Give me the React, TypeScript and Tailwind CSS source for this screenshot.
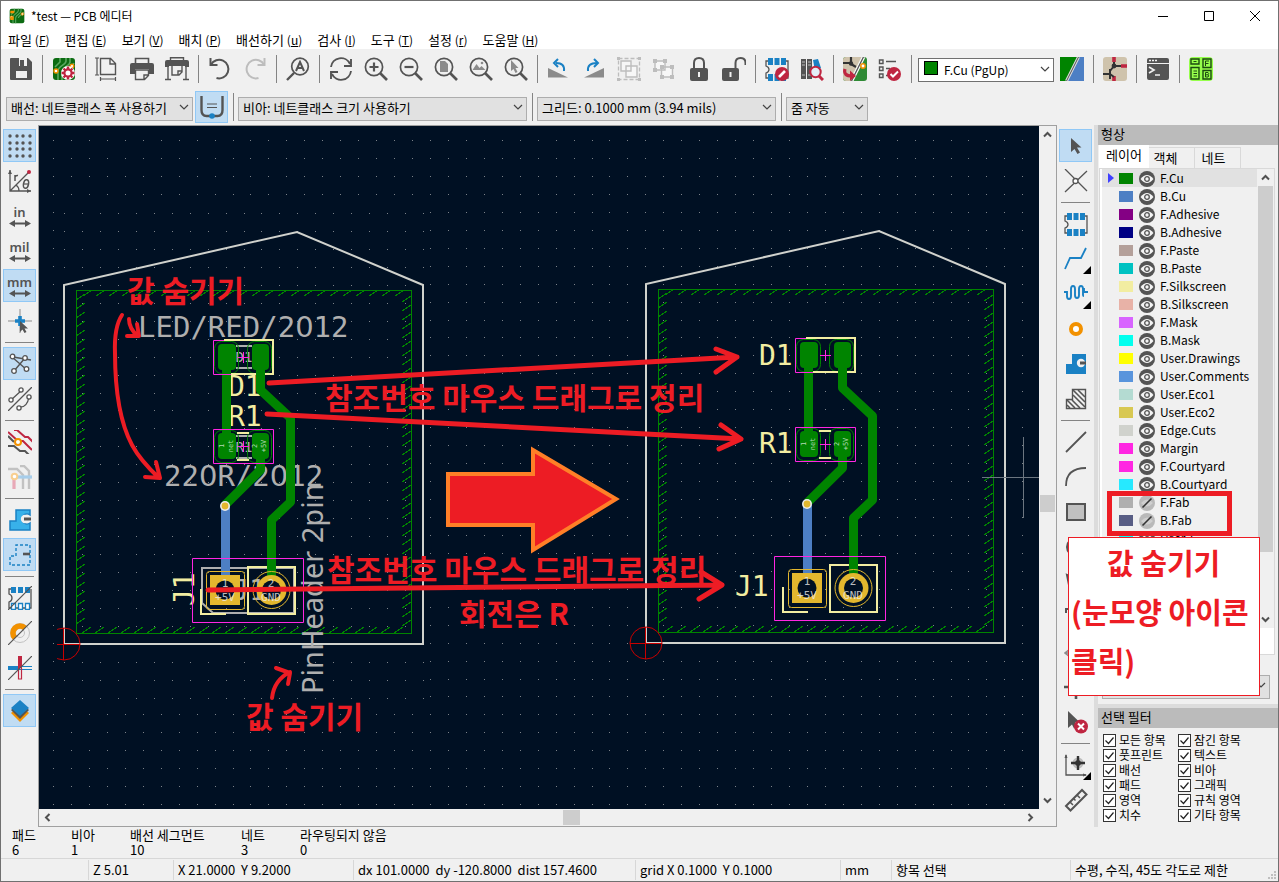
import React from 'react';

const DARK = '#545454';
const BLUE = '#1a81c4';
const RED = '#bf2641';
const ORANGE = '#f29100';
const CU = '#008400';
const SILK = '#f2eda1';
const FAB = '#afafaf';
const PAD = '#e3b72e';
const BG = '#001023';
const MARK = '#ed1c24';

type IconProps = { children: React.ReactNode; size?: number; color?: string };

const Ic: React.FC<IconProps> = ({ children, size = 24, color = DARK }) => (
  <svg width={size} height={size} viewBox={`0 0 ${size} ${size}`} fill="none" stroke={color} strokeWidth="1.6">
    {children}
  </svg>
);

const Lens: React.FC<{ children: React.ReactNode }> = ({ children }) => (
  <Ic>
    <circle cx="10" cy="10" r="8.6" strokeWidth="1.7" />
    <path d="M16 16l7 7" strokeWidth="2.6" />
    {children}
  </Ic>
);

const boardArt = (
  <>
    <rect width="22" height="22" x="1" y="1" rx="3" fill="#0c6b12" stroke="none" />
    <path d="M8 1v4L3 10M14 1v3c0 4-8 5-8 10v9M18 1v4c0 4-8 5-8 10v8M22 6c-2 5-7 4-8 9" stroke="#5aa860" strokeWidth="1.6" />
    <circle cx="4" cy="14" r="2" fill="#fff" stroke={ORANGE} strokeWidth="1.4" />
    <circle cx="20" cy="9" r="1.8" fill="#fff" stroke={ORANGE} strokeWidth="1.4" />
  </>
);

const chip = (
  <>
    <path d="M3 4H1v5q3 1 3 3.500t-3 3.500V21h2M21 4h2v17h-2" strokeWidth="1.300" />
    <path d="M3 1h5v7H3zM9.500 1h5v7h-5zM16 1h5v7h-5zM3 17h5v7H3zM9.500 17h5v7h-5zM16 17h5v7h-5z" fill={BLUE} stroke="none" />
  </>
);

const schematicArt = (
  <>
    <rect width="24" height="24" rx="3" fill="#cfc3ac" stroke="none" />
    <path d="M11 0v5M18 9h6M11 24v-5" stroke={RED} strokeWidth="3.600" />
    <path d="M11 5v5M11 9h7M11 9l-4 5M7 12v10M0 17h7M7 17l4 3" stroke="#333" strokeWidth="2" />
    <circle cx="11" cy="9" r="2.400" fill="#333" stroke="none" />
  </>
);

const icons: Record<string, React.ReactNode> = {
  save: (
    <Ic>
      <path d="M1 2q0-1 1-1h17l4 4v17q0 1-1 1H2q-1 0-1-1z" fill={DARK} stroke="none" />
      <path d="M7 1h11v8H7zM7 14h11v7H7z" fill="#f0f0f0" stroke="none" />
      <path d="M11 3h4v6h-4z" fill={DARK} stroke="none" />
      <path d="M7 1h3v8H7z" fill={DARK} stroke="none" />
    </Ic>
  ),
  boardSetup: (
    <Ic>
      {boardArt}
      <circle cx="16" cy="16" r="7" fill="#fff" stroke="none" />
      <path d="M16 9.500v13M9.500 16h13M11.500 11.500l9 9M20.500 11.500l-9 9" stroke={RED} strokeWidth="2.400" />
      <circle cx="16" cy="16" r="3.600" fill="#fff" stroke={RED} strokeWidth="2.200" />
    </Ic>
  ),
  page: (
    <Ic>
      <path d="M5.500 1.500h10l5 5v11h-15zM15 1.500v5.500h5.500" strokeWidth="1.400" />
      <path d="M0 1h4M0 18h4M2 1v17M5 22h16M5.500 20v4M20.500 20v4" strokeWidth="1.200" />
    </Ic>
  ),
  print: (
    <Ic>
      <path d="M5.500 7V1.500h13V7" />
      <path d="M0 8q0-2 2-2h20q2 0 2 2v9h-5v-5H5v5H0z" fill={DARK} stroke="none" />
      <path d="M5.500 13v9.500h9l4-4V13zM14 22v-4h4" fill="#f0f0f0" strokeWidth="1.400" />
    </Ic>
  ),
  plot: (
    <Ic>
      <path d="M5.500 3V.8h13V3" strokeWidth="1.400" />
      <path d="M0 5q0-2 2-2h20q2 0 2 2v5h-4V9H4v1H0z" fill={DARK} stroke="none" />
      <path d="M3 10v12M21 10v12M0 22.500h6M18 22.500h6M7 9v9h7l3-3V9M13 18v-4h4" strokeWidth="1.400" />
    </Ic>
  ),
  undo: (
    <Ic>
      <path d="M2.500 1v7h7" strokeWidth="2" />
      <path d="M3 7.500A9.300 9.300 0 1 1 8.500 21" strokeWidth="2" />
    </Ic>
  ),
  redo: (
    <Ic color="#bdbdbd">
      <path d="M21.500 1v7h-7" strokeWidth="2" />
      <path d="M21 7.500A9.300 9.300 0 1 0 15.500 21" strokeWidth="2" />
    </Ic>
  ),
  find: (
    <Ic>
      <circle cx="14" cy="9.500" r="8.300" strokeWidth="1.700" />
      <path d="M8 16l-7 7" strokeWidth="2.400" />
      <path d="M10 14l4-9 4 9M11.500 11h5" strokeWidth="2" />
    </Ic>
  ),
  refresh: (
    <Ic>
      <path d="M2 10a10 10 0 0 1 19-3M22 14a10 10 0 0 1-19 3" strokeWidth="1.900" />
      <path d="M22 2v7h-7M2 22v-7h7" strokeWidth="1.900" />
    </Ic>
  ),
  zoomIn: (
    <Lens>
      <path d="M10 5.500v9M5.500 10h9" strokeWidth="2.200" />
    </Lens>
  ),
  zoomOut: (
    <Lens>
      <path d="M5.500 10h9" strokeWidth="2.200" />
    </Lens>
  ),
  zoomPage: (
    <Lens>
      <path d="M6 4h5l3 3v8H6z" fill="#8b8b8b" stroke="none" />
    </Lens>
  ),
  zoomObjects: (
    <Lens>
      <path d="M3.500 13l4-6 3 4 2-2 4 4z" fill="#8b8b8b" stroke="none" />
      <circle cx="13" cy="6" r="1.300" fill="#8b8b8b" stroke="none" />
    </Lens>
  ),
  zoomSelection: (
    <Lens>
      <path d="M7 3v11l2.500-2 2 4 2-1-2-4h3z" fill="#8b8b8b" stroke="none" />
    </Lens>
  ),
  rotateCcw: (
    <Ic>
      <path d="M1 11l20 9.500H1z" fill="#8b8b8b" stroke="none" />
      <path d="M17 14q1-8-8-8" stroke={BLUE} strokeWidth="2" />
      <path d="M11 2L7 6l4 4" stroke={BLUE} strokeWidth="2" />
    </Ic>
  ),
  rotateCw: (
    <Ic>
      <path d="M22 11L2 20.500h20z" fill="#8b8b8b" stroke="none" />
      <path d="M6 14q-1-8 9-8" stroke={BLUE} strokeWidth="2" />
      <path d="M12 2l4 4-4 4" stroke={BLUE} strokeWidth="2" />
    </Ic>
  ),
  group: (
    <Ic color="#bdbdbd">
      <rect x="1.500" y="1.500" width="21" height="21" strokeDasharray="4 2" strokeWidth="1.300" />
      <path d="M4 4h10v10H4zM9 9h11v11H9z" fill="#f7f7f7" strokeWidth="1.400" />
      <path d="M0 0h3v3H0zM21 0h3v3h-3zM0 21h3v3H0zM21 21h3v3h-3z" fill="#bdbdbd" stroke="none" />
    </Ic>
  ),
  ungroup: (
    <Ic color="#bdbdbd">
      <path d="M3 4h10v9H3zM9.500 10h11v10h-11z" fill="#f7f7f7" strokeWidth="1.400" />
      <path d="M1 2h4v4H1zM11 2h4v4h-4zM1 11h4v4H1zM8 8h4v4H8zM18 8h4v4h-4zM8 18h4v4H8zM18 18h4v4h-4z" fill="#bdbdbd" stroke="none" />
    </Ic>
  ),
  lock: (
    <Ic>
      <rect x="3" y="11" width="18" height="13" rx="2" fill={DARK} stroke="none" />
      <path d="M7 11V6q0-5 5-5t5 5v5" strokeWidth="2" />
      <path d="M12 15v5" stroke="#f0f0f0" strokeWidth="2" />
    </Ic>
  ),
  unlock: (
    <Ic>
      <rect x="0" y="11" width="17" height="13" rx="2" fill={DARK} stroke="none" />
      <path d="M13.500 11V6q0-5 5-5t5 5v2" strokeWidth="2" />
      <path d="M8.500 15v5" stroke="#f0f0f0" strokeWidth="2" />
    </Ic>
  ),
  footprintEditor: (
    <Ic>
      {chip}
      <circle cx="17" cy="17" r="7" fill={RED} stroke="none" />
      <path d="M14 20l6-6" stroke="#fff" strokeWidth="2.600" />
    </Ic>
  ),
  library: (
    <Ic>
      <path d="M1 2h5v20H1zM7 2h5v20H7z" fill={DARK} stroke="none" />
      <path d="M2 5h3M2 8h3M8 5h3M8 8h3M2 18h3M8 18h3" stroke="#bbb" strokeWidth="1" />
      <path d="M13 3l5-1 3 9-6 3z" fill={BLUE} stroke="none" />
      <circle cx="15.500" cy="15" r="5.200" fill="#e4eef7" stroke={RED} strokeWidth="2" />
      <path d="M19 19l4 4" stroke={RED} strokeWidth="3" />
    </Ic>
  ),
  updatePcb: (
    <Ic>
      <rect width="24" height="24" rx="3" fill="#2f8a35" stroke="none" />
      <path d="M0 3q0-3 3-3h16L7 24H3q-3 0-3-3z" fill="#cfc3ac" stroke="none" />
      <path d="M8 0v7M8 6H0M8 7l5 3" stroke="#333" strokeWidth="2.200" />
      <circle cx="8" cy="6.500" r="2.200" fill="#333" stroke="none" />
      <path d="M20.500 0l-12 24" stroke="#fff" strokeWidth="3.600" />
      <path d="M20.500 0l-12 24" stroke={DARK} strokeWidth="1.300" />
      <circle cx="20" cy="9" r="2.200" fill="#fff" stroke={ORANGE} strokeWidth="1.500" />
      <path d="M2 12q-2 7 7 7" stroke={RED} strokeWidth="3.200" />
      <path d="M7 13.500V24l6-5z" fill={RED} stroke="none" />
    </Ic>
  ),
  drc: (
    <Ic>
      <path d="M1.500 3h3.500v3.500H1.500zM1.500 10h3.500v3.500H1.500zM1.500 17h3.500v3.500H1.500z" strokeWidth="1.400" />
      <path d="M8 4.500h10M8 11.500h4M8 18.500h2" strokeWidth="1.400" />
      <circle cx="16" cy="17" r="7" fill={RED} stroke="none" />
      <path d="M12.500 17l2.500 2.500 5-5" stroke="#fff" strokeWidth="2" />
    </Ic>
  ),
  layerPair: (
    <Ic>
      <path d="M0 0h24v24H0z" fill="#4d7fc4" stroke="none" />
      <path d="M0 0h18L6 24H0z" fill={CU} stroke="none" />
      <path d="M18.500 0l-12 24" stroke="#ddd" strokeWidth="3" />
      <path d="M18.500 0l-12 24" stroke={DARK} strokeWidth="1" />
    </Ic>
  ),
  schematic: <Ic>{schematicArt}</Ic>,
  console: (
    <Ic>
      <path d="M1 3q0-2 2-2h18q2 0 2 2v3H1zM1 7h22v14q0 2-2 2H3q-2 0-2-2z" fill={DARK} stroke="none" />
      <path d="M3 3.500h2M6 3.500h2M9 3.500h2" stroke="#f0f0f0" />
      <path d="M3 10l5 3-5 3M9 18h5" stroke="#f0f0f0" strokeWidth="1.700" />
    </Ic>
  ),
  script: (
    <Ic color="#1c4a10">
      <rect width="24" height="24" rx="4" fill="#96ff4b" stroke="none" />
      <path d="M2 2h8v5H2zM2 10.500h8V22H2zM14 2h8v8.500h-8zM14 13.500h8V22h-8z" strokeWidth="1.400" />
      <path d="M4.500 4.500h3M4.500 14h3.500M4.500 16.500h3.500M4.500 19h3.500M16.500 9V4h3.500M16.500 6.500h3M16.500 15.500v4.500h2.500q1.500-1.200 0-2.200h-2.500M19 17.800q1.500-1.200 0-2.300h-2.500" strokeWidth="1" />
    </Ic>
  ),
  trackWidth: (
    <Ic>
      <path d="M1.500 1v14q0 6 5 6h11q5 0 5-6V1" strokeWidth="2.400" />
      <path d="M7 9h10M7 12.500h10" strokeWidth="1.200" />
      <circle cx="12" cy="21" r="2.800" fill={BLUE} stroke="none" />
    </Ic>
  ),
  grid: (
    <Ic>
      {[2, 9, 15, 22].map((y) =>
        [2, 9, 15, 22].map((x) => <circle key={`${x}-${y}`} cx={x} cy={y} r="1.700" fill={DARK} stroke="none" />)
      )}
    </Ic>
  ),
  polar: (
    <Ic>
      <path d="M2 1v21h21M2 22L21 3M11 22q0-4-3-6" strokeWidth="1.300" />
      <path d="M0 5l2-4 2 4zM19 20l4 2-4 2z" fill={DARK} stroke="none" />
      <circle cx="21" cy="3" r="2" fill={RED} stroke="none" />
      <path d="M7 12V6M7 8q1-2 3-1.500" strokeWidth="1.500" />
      <ellipse cx="18" cy="15" rx="2.500" ry="4.300" strokeWidth="1.500" transform="rotate(12 18 15)" />
      <path d="M15.500 15h5" strokeWidth="1.200" />
    </Ic>
  ),
  cursorShape: (
    <Ic>
      <path d="M0 12h24M12 0v24" strokeWidth="1" stroke="#8b8b8b" />
      <path d="M12 7v10M7 12h10" stroke={BLUE} strokeWidth="3.600" />
      <path d="M12 12v11l2.500-2.500 2 3.500 2-1-2-3.500h3.500z" fill={DARK} stroke="none" />
    </Ic>
  ),
  ratsnest: (
    <Ic>
      <path d="M4 5l15 13M17 6L6 19M5 5l18 3" strokeWidth="1.400" />
      {[[4.5, 4.5], [17, 6], [6, 19], [18.500, 17]].map(([x, y]) => (
        <circle key={x} cx={x} cy={y} r="2.300" fill="#fff" strokeWidth="1.300" />
      ))}
    </Ic>
  ),
  curvedRatsnest: (
    <Ic>
      <path d="M0 24L24 0M3 13L14 3M11 20q8 1 10-10" strokeWidth="1.300" />
      {[[3, 13], [13, 3], [11, 21], [21, 10]].map(([x, y]) => (
        <circle key={`${x}${y}`} cx={x} cy={y} r="2.100" fill="#fff" strokeWidth="1.300" />
      ))}
    </Ic>
  ),
  netHighlight: (
    <Ic>
      <path d="M0 2l10 9h5l7 7 2 2" stroke={RED} strokeWidth="2" />
      <path d="M6 0h3l8 7h3l5 5" stroke={RED} strokeWidth="2" />
      <path d="M0 6l6 6M0 16h6l6 5h5l4 4" strokeWidth="2" />
      <circle cx="10" cy="12" r="3" fill="#fff" stroke={ORANGE} strokeWidth="2" />
    </Ic>
  ),
  contrast: (
    <Ic color="#c2c2c2">
      <path d="M0 4h9l6 6v14M12 1h4l5 5v18" strokeWidth="2.400" />
      <path d="M7 12h17" stroke="#a7cdea" strokeWidth="3.200" />
      <path d="M6 12v12" stroke="#e8a9b7" strokeWidth="3.200" />
      <circle cx="6.500" cy="11.500" r="2.800" fill="#fff" stroke="#f8cf90" strokeWidth="2" />
    </Ic>
  ),
  zoneFilled: (
    <Ic>
      <path d="M2 22V13h6V2h14v5a5 5 0 1 0 0 8v7z" fill="#38b1ea" stroke={BLUE} strokeWidth="1.500" />
      <circle cx="17" cy="11" r="4.200" fill="#f0f0f0" stroke="none" />
      <path d="M16 11h7" strokeWidth="3" />
    </Ic>
  ),
  zoneOutline: (
    <Ic>
      <path d="M2 22V13h6V2h14v20z" stroke={BLUE} strokeWidth="1.400" strokeDasharray="3 2" />
      <path d="M15 11h7" strokeWidth="2.600" />
    </Ic>
  ),
  padSketch: (
    <Ic>
      <path d="M3 3H1v5q3 1 3 4t-3 4v6h22V3" strokeWidth="1.300" />
      <path d="M3 1h5v6H3zM10 1h5v6h-5zM17 1h5v6h-5z" fill={BLUE} stroke="none" />
      <path d="M3.500 17.500h4v6h-4zM10.500 17.500h4v6h-4zM17.500 17.500h4v6h-4z" fill="#fff" stroke={BLUE} strokeWidth="1.300" />
      <path d="M0 24L24 0" strokeWidth="1.200" />
    </Ic>
  ),
  viaSketch: (
    <Ic>
      <circle cx="12" cy="12" r="9.500" stroke="#c2c2c2" strokeWidth="1" />
      <circle cx="12" cy="12" r="4.500" stroke="#c2c2c2" strokeWidth="1" />
      <path d="M7 17A7 7 0 1 1 17 7" stroke={ORANGE} strokeWidth="5.500" />
      <path d="M0 24L24 0" strokeWidth="1.200" />
    </Ic>
  ),
  trackSketch: (
    <Ic>
      <path d="M0 12h12" stroke={BLUE} strokeWidth="4" />
      <path d="M12 10.500h12M12 13.500h12" stroke={BLUE} strokeWidth="1.100" />
      <path d="M12 0v12" stroke={RED} strokeWidth="4" />
      <path d="M10.500 12v11h3V12" stroke={RED} strokeWidth="1.200" />
      <path d="M0 24L24 0" strokeWidth="1.200" />
    </Ic>
  ),
  layers: (
    <Ic>
      <path d="M3 14l9-8 9 8-9 9z" fill={ORANGE} stroke="none" />
      <path d="M3 11l9-8 9 8-9 9z" fill={DARK} stroke="none" />
      <path d="M3 9l9-8 9 8-9 8z" fill={BLUE} stroke="none" />
    </Ic>
  ),
  select: (
    <Ic>
      <path d="M7 4v14l3.500-3 3 5 2.500-1.500-3-5h4.500z" fill={DARK} stroke="none" />
    </Ic>
  ),
  localRatsnest: (
    <Ic>
      <path d="M1 0l22 22M23 2L1 23" strokeWidth="1.300" />
      <circle cx="11.500" cy="12" r="2.500" fill="#fff" strokeWidth="1.300" />
    </Ic>
  ),
  footprint: <Ic>{chip}</Ic>,
  route: (
    <Ic>
      <path d="M1 22L6 11h11L22 1" stroke={BLUE} strokeWidth="1.800" />
    </Ic>
  ),
  tune: (
    <Ic>
      <path d="M0 10h3v4q0 3 2 3t2-3V7q0-3 2-3t2 3v6q0 3 2 3t2-3V7q0-3 2-3t2 3v6q0 1 1 1M19 8v-1h1v3h4" stroke={BLUE} strokeWidth="1.900" />
    </Ic>
  ),
  via: (
    <Ic>
      <circle cx="12" cy="12" r="5" fill="#fff" stroke={ORANGE} strokeWidth="4" />
    </Ic>
  ),
  zone: (
    <Ic>
      <path d="M2 22V12h6V2h14v20z" fill={BLUE} stroke="none" />
      <circle cx="17" cy="11" r="4.200" fill="#f0f0f0" stroke="none" />
      <path d="M16 11h6" strokeWidth="3" />
    </Ic>
  ),
  ruleArea: (
    <Ic>
      <path d="M2.500 21.500V12.500h6v-10h13v19z" strokeWidth="1.400" />
      <path d="M9 3l12 12M14 3l7 7M9 8l12 12M3 13l8 8M8 13l8 8M3 18l3 3" strokeWidth="1.600" />
    </Ic>
  ),
  line: (
    <Ic>
      <path d="M2 22L22 2" strokeWidth="1.800" />
    </Ic>
  ),
  arc: (
    <Ic>
      <path d="M2 21Q2 3 22 3" strokeWidth="1.800" />
    </Ic>
  ),
  rect: (
    <Ic>
      <rect x="3" y="4" width="18" height="16" fill="#c0c0c0" strokeWidth="2" />
    </Ic>
  ),
  circle: (
    <Ic>
      <circle cx="12" cy="12" r="9" fill="#c0c0c0" strokeWidth="2" />
    </Ic>
  ),
  polygon: (
    <Ic>
      <path d="M3 5l9 4 9-5-3 16H6z" fill="#c0c0c0" strokeWidth="2" />
    </Ic>
  ),
  text: (
    <Ic>
      <path d="M2 8V4h20v4M12 4v17" strokeWidth="2" />
    </Ic>
  ),
  dimension: (
    <Ic>
      <path d="M6 9l-5 4 5 4M1 13h22" stroke="#8b8b8b" />
      <path d="M5 14v8" stroke={BLUE} strokeWidth="2" />
    </Ic>
  ),
  origin: (
    <Ic>
      <circle cx="12" cy="12" r="8" fill="#bdbdbd" stroke="none" />
      <path d="M12 1v23M0 12h24" strokeWidth="2.600" />
    </Ic>
  ),
  remove: (
    <Ic>
      <path d="M4 1v17l4-3.500 2 4 3-2-2-4h5z" fill={DARK} stroke="none" />
      <circle cx="17" cy="16.500" r="7" fill={RED} stroke="none" />
      <path d="M14 13.500l6 6M20 13.500l-6 6" stroke="#fff" strokeWidth="2" />
    </Ic>
  ),
  gridOrigin: (
    <Ic>
      <path d="M2 2v20h20" strokeWidth="1.300" />
      <path d="M.5 5L2 1l1.500 4zM19 20.500l4 1.500-4 1.500z" fill={DARK} stroke="none" />
      <circle cx="14" cy="10" r="5.500" fill="#bdbdbd" stroke="none" />
      <path d="M14 3v14M7 10h14" stroke="#333" strokeWidth="2.400" />
      <path d="M14 6l4 4-4 4-4-4z" fill="#333" stroke="none" />
    </Ic>
  ),
  measure: (
    <Ic>
      <path d="M2 18L18 2l4.500 4.500L6.500 22.500z" strokeWidth="2" />
      <path d="M6 14l3 3M9.500 10.500l2 2M13 7l3 3" strokeWidth="1.500" />
    </Ic>
  ),
};

const Unit: React.FC<{ label: string }> = ({ label }) => (
  <span className="flex flex-col items-center font-['Noto_Sans'] text-[13px] leading-[14px] font-semibold text-[#545454]">
    {label}
    <svg className="mt-px" width="22" height="7" viewBox="0 0 22 7" fill="#545454">
      <path d="M0 3.500L6 0v2.500h10V0l6 3.500L16 7V4.500H6V7z" />
    </svg>
  </span>
);

const topBar = [
  'save', '|', 'boardSetup', '|', 'page', 'print', 'plot', '|', 'undo', 'redo', '|', 'find', '|',
  'refresh', 'zoomIn', 'zoomOut', 'zoomPage', 'zoomObjects', 'zoomSelection', '|',
  'rotateCcw', 'rotateCw', 'group', 'ungroup', 'lock', 'unlock', '|',
  'footprintEditor', 'library', '|', 'updatePcb', 'drc', '|',
];
const topBarEnd = ['layerPair', '|', 'schematic', '|', 'console', '|', 'script'];

const leftBar = [
  'grid*', 'polar', 'in', 'mil', 'mm*', 'cursorShape', '|', 'ratsnest*', 'curvedRatsnest', '|',
  'netHighlight', 'contrast', '|', 'zoneFilled', 'zoneOutline*', '|',
  'padSketch', 'viaSketch', 'trackSketch', '|', 'layers*',
];

const rightBar = [
  'select*', 'localRatsnest', '|', 'footprint', 'route+', 'tune+', 'via', 'zone', 'ruleArea', '|',
  'line', 'arc', 'rect', 'circle', 'polygon', 'text', 'dimension', 'origin', 'remove', '|',
  'gridOrigin+', 'measure',
];

// "*" marks a pressed tool, "+" one with a flyout
const Tool: React.FC<{ id: string }> = ({ id }) => {
  const name = id.replace(/[*+]/, '');
  const on = id.endsWith('*');
  return (
    <button
      aria-label={name}
      aria-pressed={on}
      className={`relative my-px flex h-[33px] w-[33px] shrink-0 items-center justify-center border ${
        on ? 'border-[#90c8f6] bg-[#c0dcf3]' : 'border-transparent'
      }`}
    >
      {icons[name] ?? <Unit label={name} />}
      {id.endsWith('+') && (
        <svg className="absolute right-0 bottom-0" width="8" height="8" viewBox="0 0 8 8">
          <path d="M8 0v8H0z" />
        </svg>
      )}
    </button>
  );
};

const SideBar: React.FC<{ items: string[]; label: string }> = ({ items, label }) => (
  <div role="toolbar" aria-label={label} className="flex w-[37px] shrink-0 flex-col items-center overflow-hidden pt-[3px]">
    {items.map((id, i) =>
      id === '|' ? (
        <div key={i} className="flex h-2 shrink-0 items-center">
          <div className="h-px w-[29px] bg-[#848484]" />
        </div>
      ) : (
        <Tool key={i} id={id} />
      )
    )}
  </div>
);

const VSep: React.FC<{ wide?: boolean }> = ({ wide }) => (
  <div className={`flex shrink-0 justify-center ${wide ? 'w-[10px]' : 'w-2'}`}>
    <div className="h-7 w-px bg-[#848484]" />
  </div>
);

const TopTools: React.FC<{ items: string[] }> = ({ items }) => (
  <>
    {items.map((id, i) =>
      id === '|' ? (
        <VSep key={i} />
      ) : (
        <button key={i} aria-label={id} className="flex h-8 w-[35px] shrink-0 items-center justify-center">
          {icons[id]}
        </button>
      )
    )}
  </>
);

const Chevron: React.FC = () => (
  <svg className="pointer-events-none absolute top-2 right-1" width="10" height="10" viewBox="0 -2 10 10" fill="none" stroke="#444" strokeWidth="1.200">
    <path d="M1 1l4 4 4-4" />
  </svg>
);

const Combo: React.FC<{ label: string; value: string; className: string }> = ({ label, value, className }) => (
  <div className={`relative shrink-0 ${className}`}>
    <select aria-label={label} className="h-6 w-full appearance-none border border-[#adadad] bg-[#e1e1e1] pr-5 pb-[2px] pl-1 text-[13px] leading-5">
      <option>{value}</option>
    </select>
    <Chevron />
  </div>
);

const menus = [
  ['파일', 'F'], ['편집', 'E'], ['보기', 'V'], ['배치', 'P'], ['배선하기', 'u'],
  ['검사', 'I'], ['도구', 'T'], ['설정', 'r'], ['도움말', 'H'],
];

const layers: [string, string, boolean][] = [
  ['F.Cu', '#008400', true],
  ['B.Cu', '#4d7fc4', true],
  ['F.Adhesive', '#840084', true],
  ['B.Adhesive', '#000084', true],
  ['F.Paste', '#b4a09a', true],
  ['B.Paste', '#00c2c2', true],
  ['F.Silkscreen', '#f2eda1', true],
  ['B.Silkscreen', '#e8b2a7', true],
  ['F.Mask', '#d864ff', true],
  ['B.Mask', '#02ffee', true],
  ['User.Drawings', '#ffff00', true],
  ['User.Comments', '#5994dc', true],
  ['User.Eco1', '#b4dbd2', true],
  ['User.Eco2', '#d8c852', true],
  ['Edge.Cuts', '#d0d2cd', true],
  ['Margin', '#ff26e2', true],
  ['F.Courtyard', '#ff26e2', true],
  ['B.Courtyard', '#26e9ff', true],
  ['F.Fab', '#afafaf', false],
  ['B.Fab', '#585d84', false],
  ['User.1', '#00ffff', true],
];

const filters = [
  '모든 항목', '잠긴 항목', '풋프린트', '텍스트', '배선', '비아',
  '패드', '그래픽', '영역', '규칙 영역', '치수', '기타 항목',
];

const Eye: React.FC<{ open: boolean }> = ({ open }) => (
  <svg width="16" height="16" viewBox="0 0 16 16" fill="none">
    <circle cx="8" cy="8" r="8" fill={open ? DARK : '#b9b9b9'} />
    {open ? (
      <>
        <path d="M1.500 8q6.500-8 13 0-6.500 8-13 0z" fill="#f4f4f4" />
        <circle cx="8" cy="8" r="2.300" stroke={DARK} strokeWidth="1.300" />
      </>
    ) : (
      <>
        <path d="M2 8q6-7 12 0-6 7-12 0z" fill="#cfcfcf" />
        <path d="M3.500 12.500l9-9" stroke="#333" strokeWidth="1.600" />
      </>
    )}
  </svg>
);

const dots = (x0: number, y0: number, cols: number, rows: number) => {
  let d = '';
  for (let r = 0; r < rows; r++) {
    for (let c = 0; c < cols; c++) {
      d += `M${Math.round(x0 + c * 17.95)} ${Math.round(y0 + r * 17.95)}h1v1h-1z`;
    }
  }
  return d;
};

const hatch = () => {
  let d = '';
  for (let y = 300; y < 633; y += 9) d += `M76 ${y}l9-6M411 ${y - 4}l-9 6`;
  for (let x = 92; x < 411; x += 13) d += `M${x} 290l-9 6M${x - 10} 633l9-6`;
  return d;
};

const Outline: React.FC = () => (
  <g fill="none">
    <path d="M64 644V285L297 232L423 285V644z" stroke="#d0d2cd" strokeWidth="2" />
    <g stroke={CU} shapeRendering="crispEdges">
      <path d="M76.500 290.500h335v343h-335z" />
      <path d={hatch()} />
    </g>
  </g>
);

const Smd: React.FC<{ top: number; names?: boolean }> = ({ top, names }) => (
  <g transform={`translate(0 ${top})`}>
    <path d="M213.500 .5h60v34h-60z" fill="none" stroke="#ff26e2" />
    <g fill={CU}>
      <rect x="218" y="4" width="18" height="26" rx="4" />
      <rect x="252" y="4" width="17" height="26" rx="4" />
    </g>
    <g fill="none" stroke={CU}>
      <rect x="214.500" y="1.500" width="24" height="32" rx="7" />
      <rect x="247.500" y="1.500" width="24" height="32" rx="7" />
    </g>
    <path d="M238 17.500h11M243.500 12v11" stroke="#ff26e2" />
    {names && (
      <g fill="#b5dab5" fontFamily="'DejaVu Sans Mono', monospace" fontSize="7" textAnchor="middle">
        <text transform="translate(224 17) rotate(-90)">1</text>
        <text transform="translate(233 17) rotate(-90)">net</text>
        <text transform="translate(257 17) rotate(-90)">2</text>
        <text transform="translate(266 17) rotate(-90)">+5V</text>
      </g>
    )}
  </g>
);

const FabDetail: React.FC = () => (
  <g fill="none" stroke={FAB} strokeWidth="2">
    <path d="M236 346h16M236 368h16M236 436h16M236 458h16" />
    <path d="M202 568h92v45h-81l-11-10z" />
    <g fill={FAB} stroke="none" fontFamily="'DejaVu Sans Mono', monospace" textAnchor="middle">
      <text x="244" y="362" fontSize="14">D1</text>
      <text x="244" y="452" fontSize="14">R1</text>
      <text x="249" y="600" fontSize="28">J1</text>
    </g>
  </g>
);

const Copper: React.FC = () => (
  <g>
    <path d="M225.500 506v80" stroke="#4d7fc4" strokeWidth="9" />
    <g fill="none" stroke={CU} strokeWidth="9" strokeLinejoin="round">
      <path d="M226.500 362v80" />
      <path d="M260.500 360v30l30 28v84l-19 18v66" />
      <path d="M260.500 446v24l-35.500 35" />
    </g>
    <Smd top={340} />
    <Smd top={429} names />
    <path d="M224 340H273V374H231M237 433h12M237 460h12" fill="none" stroke={SILK} strokeWidth="2" />
    <path d="M260.500 366v12" stroke={CU} strokeWidth="9" />
    <circle cx="225" cy="506" r="5" fill="#ececec" />
    <circle cx="225" cy="506" r="3.400" fill={PAD} />
    <path d="M192.500 558.500h111v64h-111z" fill="none" stroke="#ff26e2" />
    <path d="M201 589v25h25M248 567h47v47h-47z" fill="none" stroke={SILK} strokeWidth="2" />
    <path d="M271.500 560v20" stroke={CU} strokeWidth="9" />
    <path d="M210 575h30v30h-30z" fill={PAD} />
    <circle cx="271.500" cy="590" r="15" fill={PAD} />
    <circle cx="225" cy="590" r="9.500" fill={BG} />
    <circle cx="271.500" cy="590" r="9.500" fill={BG} />
    <g fill="none" stroke={PAD}>
      <rect x="206.500" y="571.500" width="38" height="38" rx="3" />
      <circle cx="271.500" cy="590" r="18.500" />
    </g>
    <g fill="#ececec" fillOpacity="0.8" fontFamily="'DejaVu Sans Mono', monospace" fontSize="11" textAnchor="middle">
      <text x="225" y="587">1</text>
      <text x="225" y="601">+5V</text>
      <text x="271" y="587">2</text>
      <text x="271" y="601">GND</text>
    </g>
  </g>
);

const Origin: React.FC = () => (
  <g fill="none" stroke="#c80000">
    <circle cx="64" cy="644" r="16" />
    <path d="M48 644.500h32M63.500 628v32" />
  </g>
);

const Board: React.FC = () => (
  <svg className="block h-full w-full" role="img" aria-label="PCB">
    <defs>
      <clipPath id="pasted">
        <path d="M57 204h370v502H57z" />
      </clipPath>
    </defs>
    <g transform="translate(-39 -126)">
      <path d={dots(53, 140, 55, 38)} fill="#7c8289" />
      <path d="M57 204h370v502H57z" fill={BG} />
      <path d={dots(64, 213, 21, 28)} fill="#7c8289" clipPath="url(#pasted)" />

      <Outline />
      <g fill={FAB} fontFamily="'DejaVu Sans Mono', monospace" fontSize="29">
        <text x="138" y="337">LED/RED/2<tspan fontFamily="'DejaVu Sans'">0</tspan>12</text>
        <text x="164" y="486">22<tspan fontFamily="'DejaVu Sans'">0</tspan>R/2<tspan fontFamily="'DejaVu Sans'">0</tspan>12</text>
        <text transform="translate(323 694) rotate(-90)" fontFamily="'Noto Sans', sans-serif" fontSize="29">PinHeader 2pin</text>
      </g>
      <FabDetail />
      <g fill={SILK} fontFamily="'DejaVu Sans Mono', monospace" fontSize="28">
        <text x="228" y="396">D1</text>
        <text x="228" y="426">R1</text>
        <text transform="translate(194 606) rotate(-90)">J1</text>
        <text x="759" y="365">D1</text>
        <text x="759" y="453">R1</text>
        <text x="735" y="596">J1</text>
      </g>
      <Copper />
      <g clipPath="url(#pasted)">
        <Origin />
      </g>

      <g transform="translate(582 -1)">
        <Outline />
        <Origin />
      </g>
      <g transform="translate(582 -2)">
        <Copper />
      </g>
      <path d="M982 477.500h57M1023.500 437v81" stroke="#6c7680" />

      <g fill="none" stroke={MARK} strokeWidth="4" strokeLinecap="round" strokeLinejoin="round">
        <path d="M122 315q-8 12-7 38 0 60 17 92 8 15 27 33M145 477l15 1-4-16" />
        <path d="M129 319q0 10 9 17M127 336h12l-2-12" />
        <path d="M272 698q2-18 18-26M276 668l14 5-2 11" />
        <path d="M269 383L737 357M716 349l21 8-21 15" strokeWidth="5" />
        <path d="M267 414L741 439M721 425l20 14-22 10" strokeWidth="5" />
        <path d="M208 590L722 585M701 572l21 13-23 14" strokeWidth="5" />
      </g>
      <path d="M448 474h85v-24l83 49-83 51v-25h-85z" fill={MARK} stroke="#ff7f27" strokeWidth="4" />
      <g fill={MARK} fontSize="30" fontWeight="700">
        <text x="127" y="302">값 숨기기</text>
        <text x="246" y="728">값 숨기기</text>
        <text x="325" y="409">참조번호 마우스 드래그로 정리</text>
        <text x="327" y="581">참조번호 마우스 드래그로 정리</text>
        <text x="459" y="625">회전은 R</text>
      </g>
    </g>
  </svg>
);

const ScrollArrow: React.FC<{ label: string; d: string }> = ({ label, d }) => (
  <button aria-label={label} className="flex h-[17px] w-[17px] shrink-0 items-center justify-center">
    <svg width="9" height="9" viewBox="0 0 9 9" fill="none" stroke="#505050" strokeWidth="2">
      <path d={d} />
    </svg>
  </button>
);

const UP = 'M1 6.500l3.500-3.500L8 6.500';
const DOWN = 'M1 2.500L4.500 6 8 2.500';
const LEFT = 'M6.500 1L3 4.500 6.500 8';
const RIGHT = 'M2.500 1L6 4.500 2.500 8';

const Appearance: React.FC = () => (
  <section className="flex min-h-0 flex-1 flex-col">
    <h2 className="h-5 shrink-0 bg-[#bbbbbb] pl-[3px] text-[13px] leading-[17px]">형상</h2>
    <div role="tablist" className="flex h-[23px] shrink-0 items-end pl-px text-[13px]">
      <button role="tab" aria-selected="true" className="h-[23px] w-[50px] bg-white pb-1 leading-[18px]">레이어</button>
      <button role="tab" className="h-[21px] w-[46px] border border-l-0 border-b-0 border-[#d9d9d9] pr-3 pb-px leading-[18px]">객체</button>
      <button role="tab" className="h-[21px] w-[46px] border border-l-0 border-b-0 border-[#d9d9d9] pr-2 pb-px leading-[18px]">네트</button>
    </div>
    <div className="mr-[3px] ml-px flex h-[487px] shrink-0 flex-col border border-[#d9d9d9] bg-white pb-[26px] pl-[2px]">
      <div className="flex min-h-0 flex-1 bg-[#f0f0f0]">
        <ul className="min-w-0 flex-1 overflow-hidden text-xs">
          {layers.map(([name, color, open], i) => (
            <li key={name} className={`flex h-[18px] items-center ${i === 0 ? 'bg-[#e1e1e1]' : ''}`}>
              <span className="flex w-[17px] shrink-0 pl-[6px]">
                {i === 0 && (
                  <svg width="6" height="10" viewBox="0 0 6 10" fill="#4040ff">
                    <path d="M0 0l6 5-6 5z" />
                  </svg>
                )}
              </span>
              <span className="mr-[6px] h-[11px] w-[14px]" style={{ backgroundColor: color }} />
              <button aria-label={`${name} 표시`} className="mr-[5px] pt-[2px]">
                <Eye open={open} />
              </button>
              {name}
            </li>
          ))}
        </ul>
        <div className="flex w-[17px] shrink-0 flex-col">
          <ScrollArrow label="위로" d={UP} />
          <div className="h-[366px] w-[15px] self-center bg-[#cdcdcd]" />
          <div className="flex-1" />
          <ScrollArrow label="아래로" d={DOWN} />
        </div>
      </div>
    </div>
    <Combo label="프리셋" value="" className="mt-[17px] mr-2 ml-1" />
  </section>
);

const SelectionFilter: React.FC = () => (
  <section className="shrink-0 border-t-4 border-[#dcdcdc]">
    <h2 className="h-5 bg-[#bbbbbb] pl-[3px] text-[13px] leading-[17px]">선택 필터</h2>
    <div className="grid h-[99px] grid-cols-[75px_1fr] content-start pt-[5px] pl-[5px] text-xs leading-[15px]">
      {filters.map((name) => (
        <label key={name} className="flex h-[15px] items-center gap-[3px] whitespace-nowrap">
          <span className="grid">
            <input type="checkbox" defaultChecked className="peer h-[13px] w-[13px] appearance-none border border-[#333] bg-white [grid-area:1/1]" />
            <svg className="pointer-events-none hidden [grid-area:1/1] peer-checked:block" width="13" height="13" viewBox="0 0 13 13" fill="none" stroke="#222">
              <path d="M2.500 6.500l3 3 5-6" strokeWidth="1.200" />
            </svg>
          </span>
          <span className="pb-[2px]">{name}</span>
        </label>
      ))}
    </div>
  </section>
);

const counts = [
  ['패드', '6', 'w-[59px]'],
  ['비아', '1', 'w-[59px]'],
  ['배선 세그먼트', '10', 'w-[111px]'],
  ['네트', '3', 'w-[59px]'],
  ['라우팅되지 않음', '0', 'w-[120px]'],
];

const status = [
  '', 'Z 5.01', 'X 21.0000  Y 9.2000', 'dx 101.0000  dy -120.8000  dist 157.4600',
  'grid X 0.1000  Y 0.1000', 'mm', '항목 선택', '수평, 수직, 45도 각도로 제한',
];

const App: React.FC = () => {
  return (
    <div className="flex h-screen min-h-[882px] flex-col overflow-hidden border border-[#707070] bg-[#f0f0f0] font-['Noto_Sans_CJK_KR',sans-serif] text-black">
      <header className="flex h-[30px] shrink-0 items-center bg-white pl-2">
        <svg width="16" height="16" viewBox="0 0 24 24" fill="none">
          {boardArt}
          <path d="M2 4h6v4H2zM2 13h5v5H2z" fill={ORANGE} />
        </svg>
        <h1 className="ml-[6px] flex-1 text-xs leading-4">*test — PCB 에디터</h1>
        {['M0 5.500h10', 'M.5 .5h9v9h-9z', 'M0 0l10 10M10 0L0 10'].map((d, i) => (
          <button key={d} aria-label={['최소화', '최대화', '닫기'][i]} className="flex h-full w-[46px] items-center justify-center">
            <svg width="10" height="10" viewBox="0 0 10 10" fill="none" stroke="#000">
              <path d={d} />
            </svg>
          </button>
        ))}
      </header>

      <nav className="flex h-[18px] shrink-0 gap-[15px] bg-white pl-[7px] text-[13px] leading-[18px]">
        {menus.map(([name, key]) => (
          <button key={name} className="whitespace-nowrap">
            {name}{' '}
            <span className="text-xs">
              (<span className="underline">{key}</span>)
            </span>
          </button>
        ))}
      </nav>

      <div role="toolbar" aria-label="main" className="flex h-10 shrink-0 items-center pl-[2px]">
        <TopTools items={topBar} />
        <div className="relative ml-[3px] w-[136px] shrink-0">
          <select aria-label="레이어" className="h-6 w-full appearance-none border border-[#707070] bg-white pl-[25px] text-xs leading-5">
            <option>F.Cu (PgUp)</option>
          </select>
          <span className="pointer-events-none absolute top-[5px] left-[6px] h-[14px] w-[14px] border border-black bg-[#008400]" />
          <Chevron />
        </div>
        <TopTools items={topBarEnd} />
      </div>

      <div role="toolbar" aria-label="options" className="flex h-9 shrink-0 items-center pl-[5px]">
        <Combo label="배선" value="배선: 네트클래스 폭 사용하기" className="mr-[2px] w-[187px]" />
        <button aria-label="trackWidth" aria-pressed="true" className="flex h-8 w-[33px] shrink-0 items-center justify-center border border-[#90c8f6] bg-[#c0dcf3]">
          {icons.trackWidth}
        </button>
        <VSep wide />
        <Combo label="비아" value="비아: 네트클래스 크기 사용하기" className="w-[289px]" />
        <VSep wide />
        <Combo label="그리드" value="그리드: 0.1000 mm (3.94 mils)" className="w-[239px]" />
        <VSep wide />
        <Combo label="줌" value="줌 자동" className="w-[82px]" />
      </div>

      <main className="relative flex min-h-0 flex-1">
        <SideBar items={leftBar} label="left" />
        <div className="flex min-w-0 flex-1 flex-col border border-[#a0a0a0]">
          <div className="flex min-h-0 flex-1">
            <div className="min-w-0 flex-1 overflow-hidden bg-[#001023]">
              <Board />
            </div>
            <div className="flex w-[17px] shrink-0 flex-col items-center">
              <ScrollArrow label="위로" d={UP} />
              <div className="basis-[352px]" />
              <div className="h-[17px] w-[15px] bg-[#cdcdcd]" />
              <div className="flex-1" />
              <ScrollArrow label="아래로" d={DOWN} />
            </div>
          </div>
          <div className="mr-[17px] flex h-[17px] shrink-0 items-center">
            <ScrollArrow label="왼쪽" d={LEFT} />
            <div className="basis-[507px]" />
            <div className="h-[15px] w-[17px] bg-[#cdcdcd]" />
            <div className="flex-1" />
            <ScrollArrow label="오른쪽" d={RIGHT} />
          </div>
        </div>
        <SideBar items={rightBar} label="right" />
        <div className="w-1 shrink-0 bg-[#dcdcdc]" />
        <aside className="flex w-[180px] shrink-0 flex-col">
          <Appearance />
          <SelectionFilter />
        </aside>

        <div className="absolute top-[366px] right-[46px] h-[45px] w-[125px] border-[5px] border-[#ed1c24]" />
        <p className="absolute top-[412px] right-[18px] h-[159px] w-[192px] border border-[#ed1c24] bg-white pl-[2px] text-[29px] leading-[49px] font-bold text-[#ed1c24]">
          <span className="block pl-9">값 숨기기</span>
          <span className="block whitespace-nowrap">(눈모양 아이콘</span>
          <span className="block">클릭)</span>
        </p>
      </main>

      <dl className="flex h-[31px] shrink-0 pl-[11px] text-[13px] leading-[15px]">
        {counts.map(([label, value, width]) => (
          <div key={label} className={`shrink-0 ${width}`}>
            <dt>{label}</dt>
            <dd>{value}</dd>
          </div>
        ))}
      </dl>

      <footer className="relative grid h-[23px] shrink-0 grid-cols-[87px_85px_180px_282px_205px_51px_179px_1fr] items-center border-t border-[#d7d7d7] text-[13px]">
        {status.map((text, i) => (
          <span key={i} className={`h-5 truncate pl-1 leading-5 whitespace-pre ${i ? 'border-l border-[#d7d7d7]' : ''}`}>
            {text}
          </span>
        ))}
        <svg className="absolute right-[2px] bottom-[2px]" width="8" height="8" viewBox="0 0 8 8" fill="#bfbfbf">
          <path d="M6 0h2v2H6zM3 3h2v2H3zM6 3h2v2H6zM0 6h2v2H0zM3 6h2v2H3zM6 6h2v2H6z" />
        </svg>
      </footer>
    </div>
  );
};

export default App;
